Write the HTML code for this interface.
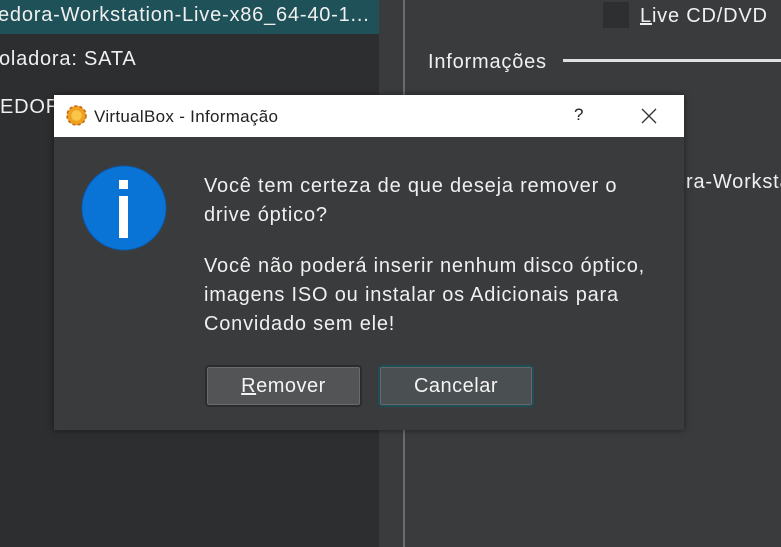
<!DOCTYPE html>
<html><head><meta charset="utf-8"><style>
*{margin:0;padding:0;box-sizing:border-box}
body{width:781px;height:547px;overflow:hidden;background:#3a3b3d;font-family:"Liberation Sans",sans-serif;color:#f0f0f0;position:relative}
.left{position:absolute;left:0;top:0;width:379px;height:547px;background:#2d2e30}
.sel{position:absolute;left:0;top:0;width:379px;height:34px;background:#1f5158}
.t{position:absolute;white-space:nowrap;font-size:20px;letter-spacing:0.8px}
.vline{position:absolute;left:403px;top:0;width:2px;height:547px;background:#6a6b6d}
.dlg{position:absolute;left:54px;top:95px;width:630px;height:335px;background:#3a3b3d;box-shadow:0 0 6px rgba(0,0,0,.5)}
.title{position:absolute;left:0;top:0;width:630px;height:42px;background:#fff;color:#222;font-size:17px;letter-spacing:0.3px}
.btn{position:absolute;top:270px;height:42px;border-radius:4px;font-size:20px;letter-spacing:0.5px;text-align:center;line-height:38px;color:#f4f4f4}
</style></head><body>
<div class="left"></div>
<div class="sel"></div>
<div class="t" style="left:-2px;top:4px">edora-Workstation-Live-x86_64-40-1...</div>
<div class="t" style="left:-1px;top:48px">oladora: SATA</div>
<div class="t" style="left:0;top:96px">EDOR</div>
<div class="vline"></div>
<div style="position:absolute;left:603px;top:2px;width:26px;height:26px;background:#2e2f31"></div>
<div class="t" style="left:640px;top:5px"><u>L</u>ive CD/DVD</div>
<div class="t" style="left:428px;top:51px">Informações</div>
<div style="position:absolute;left:563px;top:59px;width:218px;height:3px;background:#e0e0e0"></div>
<div class="t" style="left:686px;top:171px">ra-Workstat</div>
<div class="dlg">
 <div class="title">
  <svg style="position:absolute;left:12px;top:10px" width="21" height="21" viewBox="0 0 20 20"><circle cx="10" cy="10" r="9" fill="#f0a020"/><circle cx="10" cy="10" r="5" fill="#f7c64a"/><circle cx="10" cy="10" r="9" fill="none" stroke="#c46a10" stroke-width="1.5" stroke-dasharray="3 2"/></svg>
  <div style="position:absolute;left:40px;top:12px">VirtualBox - Informação</div>
  <div style="position:absolute;left:520px;top:10px;font-size:17px">?</div>
  <svg style="position:absolute;left:587px;top:13px" width="16" height="16"><path d="M1 1L15 15M15 1L1 15" stroke="#333" stroke-width="1.3"/></svg>
 </div>
 <svg style="position:absolute;left:27px;top:70px" width="86" height="86"><circle cx="43" cy="43" r="42" fill="#0a74d6" stroke="#0a5bb0" stroke-width="1"/><rect x="38" y="15" width="9" height="9" fill="#fff"/><rect x="38" y="31" width="9" height="42" fill="#fff"/></svg>
 <div class="t" style="left:150px;top:77px;line-height:29px">Você tem certeza de que deseja remover o<br>drive óptico?</div>
 <div class="t" style="left:150px;top:157px;line-height:29px">Você não poderá inserir nenhum disco óptico,<br>imagens ISO ou instalar os Adicionais para<br>Convidado sem ele!</div>
 <div class="btn" style="left:151px;width:157px;background:#535456;border:2px solid #2b2c2e;box-shadow:inset 0 0 0 1px #6a6b6d"><u>R</u>emover</div>
 <div class="btn" style="left:324px;width:156px;background:#4a4f52;border:2px solid #1f4e55;box-shadow:inset 0 0 0 1px #65696c">Cancelar</div>
</div>
</body></html>
